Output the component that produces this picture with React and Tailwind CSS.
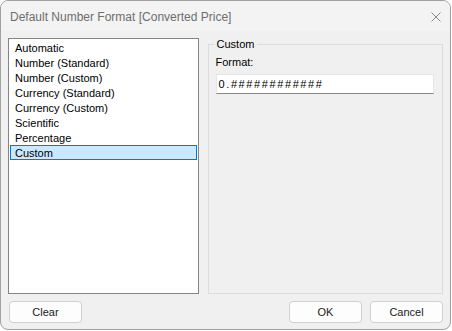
import React from 'react';

const formats = [
  'Automatic',
  'Number (Standard)',
  'Number (Custom)',
  'Currency (Standard)',
  'Currency (Custom)',
  'Scientific',
  'Percentage',
  'Custom',
];

const DialogButton = ({ children, className = '' }) => (
  <button
    className={`h-[22px] w-[73px] rounded-[4px] border border-[#d0d0d0] bg-[#fdfdfd] text-[11px] text-[#1a1a1a] ${className}`}
  >
    {children}
  </button>
);

const App = () => {
  const selected = 'Custom';

  return (
    <div
      className="h-[331px] w-[452px] bg-white"
      style={{ fontFamily: '"Liberation Sans", Arial, sans-serif' }}
    >
      <div className="flex h-[330px] w-[451px] flex-col overflow-hidden rounded-[8px] border border-[#a0a0a0] bg-[#f0f0f0]">
        {/* Title bar */}
        <div className="flex h-[30px] shrink-0 items-center justify-between bg-[#f3f3f3] pl-[9px] pr-[9px] pt-[1px]">
          <span className="text-[12px] text-[#6e6e6e]">Default Number Format [Converted Price]</span>
          <svg width="10" height="10" viewBox="0 0 10 10">
            <path d="M0.5 0.5 L9.5 9.5 M9.5 0.5 L0.5 9.5" stroke="#8a8a8a" strokeWidth="1" />
          </svg>
        </div>

        {/* Body */}
        <div className="flex flex-1 flex-col px-[7px] pt-[7px]">
          <div className="flex gap-[9px]">
            {/* List */}
            <div className="h-[256px] w-[191px] border border-[#858585] bg-white pt-[1px]">
              {formats.map((f) => (
                <div
                  key={f}
                  className={`mx-[1px] h-[15px] border pl-[4px] pt-[1px] text-[11px] leading-[13px] text-black ${
                    f === selected ? 'border-[#0078d7] bg-[#cce8ff]' : 'border-transparent'
                  }`}
                >
                  {f}
                </div>
              ))}
            </div>

            {/* Group */}
            <fieldset className="-mt-[1px] h-[257px] w-[236px] border border-[#dcdcdc] px-[7px]">
              <legend className="-ml-[2px] px-[3px] text-[11px] leading-[14px] text-black">Custom</legend>
              <div className="pt-[4px] text-[11px] leading-[15px] text-black">Format:</div>
              <div className="mt-[4px] flex h-[20px] w-[218px] items-center border border-[#e5e5e5] border-b-[#868686] bg-white pl-[2px] text-[11px] tracking-[1.6px] text-black">
                0.############
              </div>
            </fieldset>
          </div>

          {/* Buttons */}
          <div className="mt-[7px] flex items-center pl-[1px]">
            <DialogButton>Clear</DialogButton>
            <div className="flex-1" />
            <DialogButton>OK</DialogButton>
            <DialogButton className="ml-[8px]">Cancel</DialogButton>
          </div>
        </div>
      </div>
    </div>
  );
};

export default App;
